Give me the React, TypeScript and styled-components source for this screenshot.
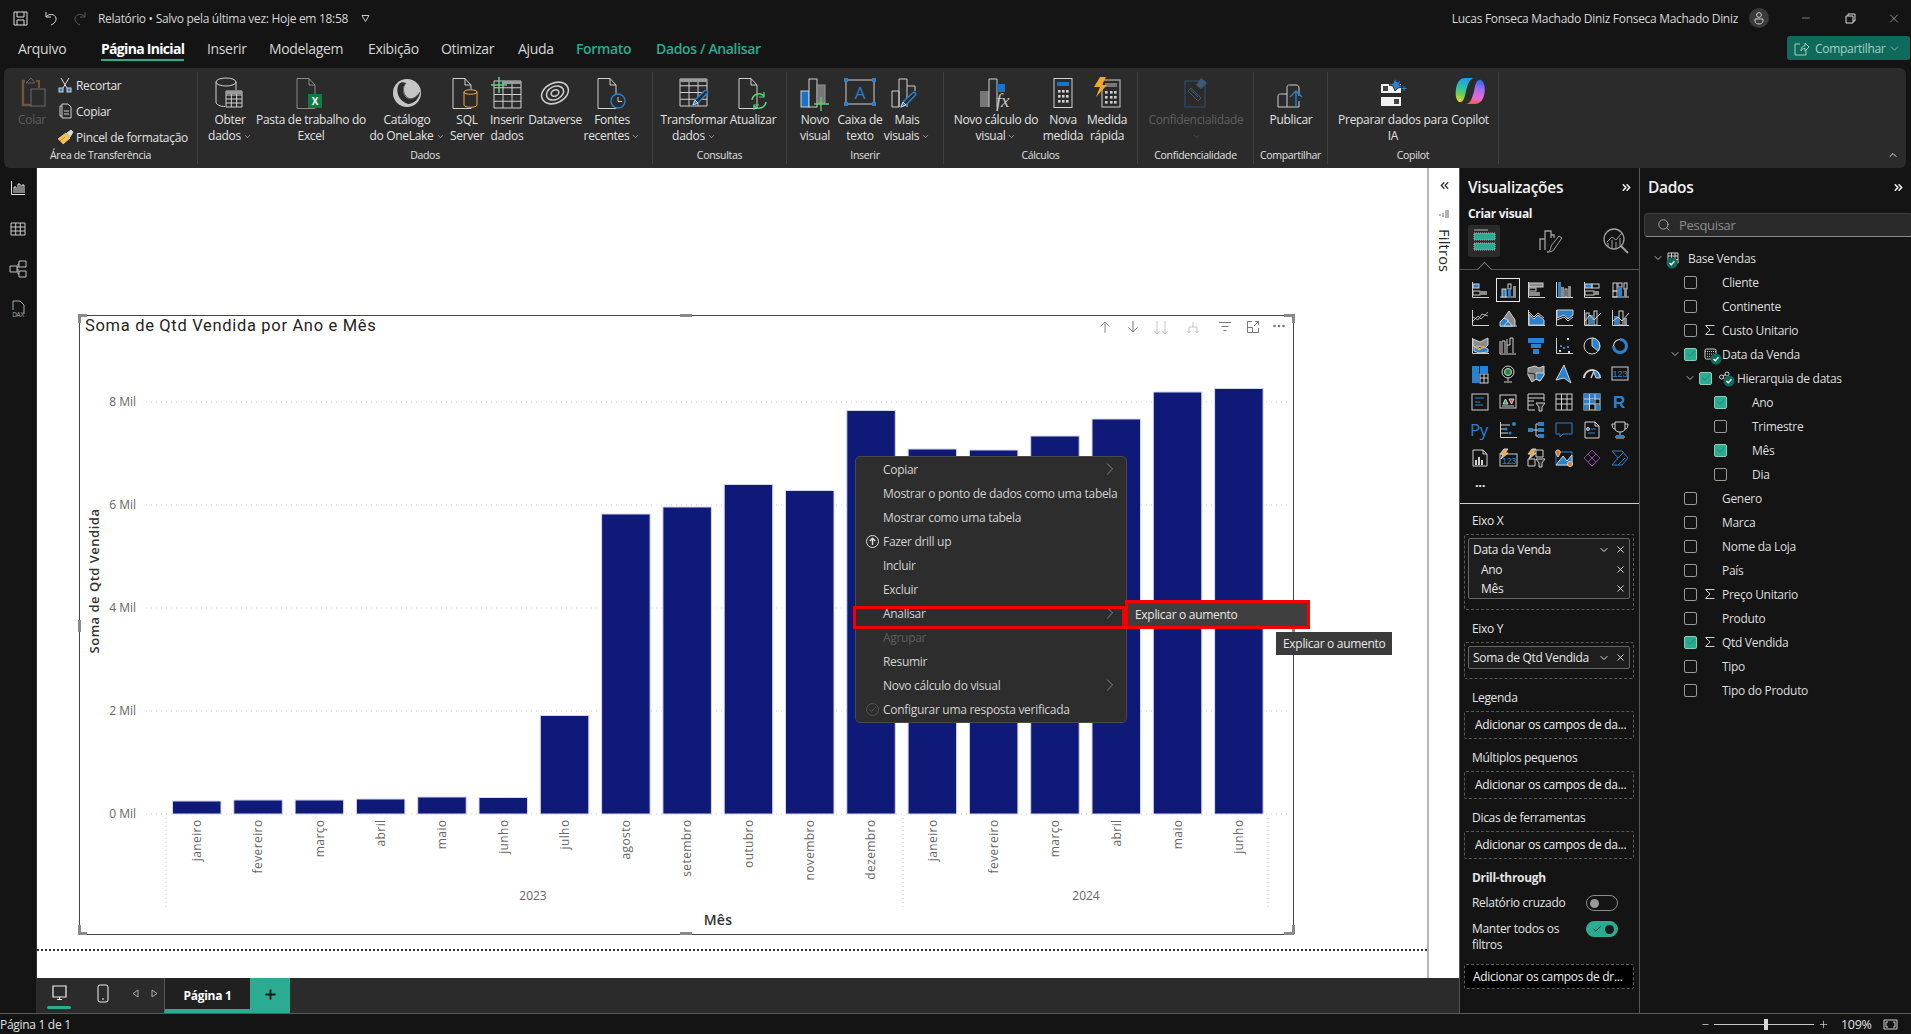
import React from 'react';
import styled, {createGlobalStyle} from 'styled-components';
import {Check, ChevronDown, ChevronRight, ChevronsLeft, ChevronsRight, ChevronUp, Minus, Plus, Search, X} from 'lucide-react';

const W = '#d0d0d0';
const B = '#2a82cf';
const Gy = '#8b8b8b';
const TEAL = '#2bab92';

const GlobalStyle = createGlobalStyle`
  html, body { margin: 0; padding: 0; background: #141414; }
  body { font-family: "Open Sans", "Liberation Sans", sans-serif; font-size: 12px; letter-spacing: -0.025em; overflow: hidden; }
  * { box-sizing: border-box; }
`;

const Root = styled.div`
  position: relative;
  width: 1911px;
  height: 1034px;
  display: flex;
  flex-direction: column;
  background: #141414;
  color: #e6e6e6;
  overflow: hidden;
`;

/* ---------- title bar ---------- */
const TitleBar = styled.div`
  height: 36px;
  flex: none;
  display: flex;
  align-items: center;
  padding: 0 10px 0 13px;
`;
const TitleIcon = styled.div<{$w: number; $dim?: boolean}>`
  flex: 0 0 ${p => p.$w}px;
  display: flex;
  opacity: ${p => (p.$dim ? 0.45 : 1)};
`;
const TitleText = styled.div`
  font-size: 12px;
  color: #d6d6d6;
  width: 263px;
  white-space: nowrap;
`;
const UserName = styled.div`
  margin-left: auto;
  white-space: nowrap;
  color: #d6d6d6;
`;
const Avatar = styled.div`
  width: 20px;
  height: 20px;
  margin-left: 11px;
  border-radius: 50%;
  background: #3a3a3a;
  display: flex;
  align-items: center;
  justify-content: center;
`;
const WinButton = styled.div<{$ml: number}>`
  margin-left: ${p => p.$ml}px;
  width: 14px;
  display: flex;
  justify-content: center;
`;

/* ---------- tabs ---------- */
const TabBar = styled.div`
  height: 32px;
  flex: none;
  display: flex;
  align-items: flex-start;
  padding: 4px 1px 0 18px;
`;
const Tab = styled.div<{$w: number; $active?: boolean; $teal?: boolean}>`
  flex: 0 0 ${p => p.$w}px;
  font-size: 14px;
  line-height: 17px;
  white-space: nowrap;
  color: ${p => (p.$teal ? TEAL : p.$active ? '#fff' : '#d4d4d4')};
  font-weight: ${p => (p.$active ? 700 : p.$teal ? 600 : 400)};
  letter-spacing: ${p => (p.$active ? '-0.05em' : '-0.025em')};
  span {
    display: inline-block;
    padding-bottom: 2px;
    border-bottom: 2px solid ${p => (p.$active ? TEAL : 'transparent')};
  }
`;
const ShareButton = styled.div`
  margin: -4px 0 0 auto;
  width: 123px;
  height: 24px;
  border-radius: 3px;
  background: #0e6b5b;
  color: #a9cdc5;
  font-size: 12px;
  display: flex;
  align-items: center;
  gap: 6px;
  padding-left: 7px;
  svg:last-child { margin-left: -3px; }
`;

/* ---------- ribbon ---------- */
const Ribbon = styled.div`
  height: 100px;
  flex: none;
  margin: 0 5px 0 4px;
  padding-top: 4px;
  background: #2b2b2b;
  border-radius: 6px;
  display: flex;
  position: relative;
`;
const RibbonGroup = styled.div<{$w: number}>`
  flex: 0 0 ${p => p.$w}px;
  min-width: 0;
  height: 92px;
  padding-top: 5px;
  display: flex;
  flex-direction: column;
  border-right: 1px solid #404040;
`;
const GroupButtons = styled.div`
  height: 70px;
  display: flex;
`;
const GroupLabel = styled.div`
  height: 16px;
  font-size: 10.5px;
  line-height: 16px;
  text-align: center;
  white-space: nowrap;
  color: #e0e0e0;
`;
const RibbonBtn = styled.div<{$w: number; $disabled?: boolean}>`
  flex: 0 0 ${p => p.$w}px;
  min-width: 0;
  display: flex;
  flex-direction: column;
  align-items: center;
  color: ${p => (p.$disabled ? '#5f5f5f' : '#e2e2e2')};
`;
const BtnIcon = styled.div`
  height: 35px;
  flex: none;
  display: flex;
  align-items: flex-start;
  justify-content: center;
`;
const BtnLabel = styled.div`
  flex: none;
  font-size: 12px;
  line-height: 16px;
  text-align: center;
  white-space: nowrap;
`;
const SmallColumn = styled.div`
  display: flex;
  flex-direction: column;
  margin: -5px 0 0 -6px;
`;
const SmallRow = styled.div`
  flex: none;
  height: 26px;
  display: flex;
  align-items: center;
  font-size: 12px;
  white-space: nowrap;
  color: #e2e2e2;
`;
const SmallIcon = styled.div`
  flex: 0 0 22px;
  display: flex;
  justify-content: center;
`;
const Collapse = styled.div`
  position: absolute;
  right: 7px;
  bottom: 7px;
  display: flex;
`;

/* ---------- main ---------- */
const Main = styled.div`
  flex: 1;
  display: flex;
  min-height: 0;
`;
const LeftNav = styled.div`
  flex: 0 0 37px;
  display: flex;
  flex-direction: column;
  border-right: 1px solid #2e2e2e;
`;
const NavSlot = styled.div`
  flex: 0 0 40.4px;
  display: flex;
  align-items: center;
  justify-content: center;
`;
const Workspace = styled.div`
  flex: 0 0 1422px;
  display: flex;
  flex-direction: column;
`;
const Sheet = styled.div`
  flex: 1;
  display: flex;
  background: #fff;
  min-height: 0;
`;
const Canvas = styled.div`
  flex: 0 0 1390px;
  padding: 147px 0 0 42px;
`;
const Visual = styled.div`
  position: relative;
  width: 1215px;
  height: 620px;
  border: 1px solid #444;
`;
const VisualTitle = styled.div`
  position: absolute;
  left: 5px;
  top: 0;
  font-family: Roboto, "Open Sans", sans-serif;
  font-size: 16.5px;
  line-height: 20px;
  letter-spacing: 0.68px;
  color: #252423;
`;
const Handle = styled.div<{$x: number; $y: number; $w: number; $h: number}>`
  position: absolute;
  left: ${p => p.$x}px;
  top: ${p => p.$y}px;
  width: ${p => p.$w}px;
  height: ${p => p.$h}px;
  background: #8a8a8a;
`;
const VisualTools = styled.div`
  position: absolute;
  right: 2px;
  top: 5px;
  display: flex;
`;
const ToolSlot = styled.div<{$w: number}>`
  flex: 0 0 ${p => p.$w}px;
  display: flex;
  justify-content: center;
`;
const PageEnd = styled.div`
  margin: 14px 0 0 -42px;
  border-top: 2px dotted #333;
`;
const FilterRail = styled.div`
  flex: 0 0 32px;
  border-left: 2px solid #b5b5b5;
  display: flex;
  flex-direction: column;
  align-items: center;
  color: #333;
  padding-top: 11px;
`;
const FilterGap = styled.div`
  height: 17px;
`;
const FilterTitle = styled.div`
  writing-mode: vertical-rl;
  font-size: 14.5px;
  font-weight: 500;
  letter-spacing: 0.25px;
  color: #252423;
  margin-top: 10px;
`;
const PageBar = styled.div`
  height: 35px;
  flex: none;
  background: #2b2b2b;
  display: flex;
`;
const DeviceSlot = styled.div<{$w: number; $active?: boolean}>`
  flex: 0 0 ${p => p.$w}px;
  position: relative;
  display: flex;
  align-items: center;
  justify-content: center;
  padding-bottom: 5px;
  &::after {
    content: "";
    display: ${p => (p.$active ? 'block' : 'none')};
    position: absolute;
    left: 10px;
    width: 24px;
    bottom: 4px;
    height: 3px;
    border-radius: 2px;
    background: ${TEAL};
  }
`;
const PageTab = styled.div`
  flex: 0 0 86px;
  margin-left: 1px;
  border-left: 1px solid #555;
  background: #202020;
  border-bottom: 4px solid ${TEAL};
  font-weight: 700;
  color: #fff;
  display: flex;
  align-items: center;
  justify-content: center;
  padding-top: 3px;
`;
const AddPage = styled.div`
  flex: 0 0 40px;
  background: ${TEAL};
  display: flex;
  align-items: center;
  justify-content: center;
  padding-bottom: 3px;
`;

/* ---------- visualizations pane ---------- */
const VizPane = styled.div`
  flex: 0 0 181px;
  border-left: 1px solid #555;
  border-right: 1px solid #555;
  display: flex;
  flex-direction: column;
`;
const PaneHeader = styled.div`
  height: 38px;
  flex: none;
  display: flex;
  align-items: center;
  justify-content: space-between;
  padding: 0 6px 0 8px;
  font-size: 15.5px;
  font-weight: 600;
  color: #f2f2f2;
`;
const CreateLabel = styled.div`
  height: 16px;
  line-height: 16px;
  padding-left: 8px;
  font-weight: 700;
  color: #f0f0f0;
`;
const VizTabs = styled.div`
  position: relative;
  height: 48px;
  padding: 3px 8px 0;
  display: flex;
  border-bottom: 1px solid #555;
`;
const VizTab = styled.div<{$active?: boolean; $w: number}>`
  flex: 0 0 ${p => p.$w}px;
  height: 32px;
  display: flex;
  align-items: center;
  justify-content: center;
  border-radius: 2px;
  background: ${p => (p.$active ? '#2b2b2b' : 'transparent')};
`;
const Notch = styled.div`
  position: absolute;
  left: 19px;
  bottom: -6px;
  width: 11px;
  height: 11px;
  background: #141414;
  border-left: 1px solid #777;
  border-top: 1px solid #777;
  transform: rotate(45deg);
`;
const VizGrid = styled.div`
  display: grid;
  grid-template-columns: repeat(6, 28px);
  grid-auto-rows: 28px;
  padding: 6px 0 0 6px;
  height: 234px;
  border-bottom: 1px solid #cfcfcf;
`;
const VizCell = styled.div<{$selected?: boolean}>`
  width: 28px;
  height: 28px;
  display: flex;
  align-items: center;
  justify-content: center;
  ${p => p.$selected && `
    > div { border: 1px solid #e8e8e8; width: 24px; height: 24px; display: flex; align-items: center; justify-content: center; }
  `}
`;
const MoreDots = styled.div`
  grid-column: 1;
  text-align: center;
  font-weight: 700;
  font-size: 13px;
  color: #e8e8e8;
  line-height: 20px;
`;
const WellTitle = styled.div<{$bold?: boolean; $first?: boolean}>`
  margin-top: ${p => (p.$first ? 9 : 11)}px;
  height: 16px;
  line-height: 16px;
  padding-left: 12px;
  color: #e4e4e4;
  font-weight: ${p => (p.$bold ? 700 : 400)};
`;
const WellBox = styled.div<{$h?: number; $black?: boolean}>`
  margin: ${p => (p.$black ? 11 : 5)}px 0 0 4px;
  width: 170px;
  ${p => (p.$h ? `height: ${p.$h}px;` : '')}
  padding: 3px 3px 10px;
  border: 1px dashed #5a5a5a;
  border-radius: 2px;
  background: ${p => (p.$black ? '#000' : 'transparent')};
`;
const WellHint = styled.div<{$black?: boolean}>`
  line-height: ${p => (p.$black ? 17 : 19)}px;
  padding-left: ${p => (p.$black ? 5 : 7)}px;
  color: #f0f0f0;
  white-space: nowrap;
`;
const FieldBox = styled.div`
  border: 1px solid #666;
  border-radius: 2px;
  background: #1e1e1e;
`;
const FieldRow = styled.div<{$sub?: boolean; $h: number}>`
  height: ${p => p.$h}px;
  display: flex;
  align-items: center;
  padding: 0 3px 0 ${p => (p.$sub ? 12 : 4)}px;
  color: #e8e8e8;
  white-space: nowrap;
  span { flex: 1; }
  svg { margin-left: 5px; }
`;
const DrillRow = styled.div<{$h: number; $mt: number}>`
  height: ${p => p.$h}px;
  margin-top: ${p => p.$mt}px;
  padding: 0 21px 0 12px;
  display: flex;
  justify-content: space-between;
  color: #e4e4e4;
  line-height: 16px;
`;
const Toggle = styled.div<{$on?: boolean}>`
  flex: none;
  width: 32px;
  height: 16px;
  border-radius: 8px;
  border: 1px solid ${p => (p.$on ? TEAL : '#8a8a8a')};
  background: ${p => (p.$on ? TEAL : 'transparent')};
  display: flex;
  align-items: center;
  justify-content: ${p => (p.$on ? 'flex-end' : 'flex-start')};
  padding: 0 3px;
  gap: 3px;
  i {
    width: 9px;
    height: 9px;
    border-radius: 50%;
    background: ${p => (p.$on ? '#1b1b1b' : '#9a9a9a')};
  }
`;

/* ---------- data pane ---------- */
const DataPane = styled.div`
  flex: 1;
  display: flex;
  flex-direction: column;
`;
const SearchBox = styled.div`
  margin: 7px -2px 0 4px;
  height: 24px;
  flex: none;
  border: 1px solid #3e3e3e;
  border-bottom-color: #8a8a8a;
  border-radius: 4px;
  background: #2a2a2a;
  display: flex;
  align-items: center;
  gap: 8px;
  padding-left: 12px;
  font-size: 13px;
  color: #8d8d8d;
`;
const Tree = styled.div`
  margin-top: 9px;
`;
const TreeRow = styled.div<{$indent: number; $table?: boolean}>`
  height: 24px;
  display: flex;
  align-items: center;
  padding-left: ${p => (p.$table ? 12 : 29 + p.$indent * 15)}px;
  color: #dedede;
  white-space: nowrap;
`;
const ExpandSlot = styled.div`
  flex: 0 0 15px;
  display: flex;
  align-items: center;
`;
const CheckBox = styled.div<{$on?: boolean}>`
  flex: 0 0 13px;
  height: 13px;
  border-radius: 2px;
  border: 1px solid ${p => (p.$on ? '#8fcabd' : '#9a9a9a')};
  background: ${p => (p.$on ? TEAL : 'transparent')};
  display: flex;
  align-items: center;
  justify-content: center;
  color: #156f5e;
`;
const FieldIcon = styled.div<{$w?: number}>`
  flex: 0 0 ${p => p.$w ?? 25}px;
  display: flex;
  align-items: center;
  padding-left: 7px;
  font-size: 15px;
  color: #dedede;
`;
const TableIcon = styled(FieldIcon)`
  padding-left: 0;
`;

/* ---------- status ---------- */
const StatusBar = styled.div`
  height: 21px;
  flex: none;
  border-top: 1px solid #5a5a5a;
  display: flex;
  align-items: center;
  color: #e0e0e0;
`;
const ZoomControl = styled.div`
  margin-left: auto;
  display: flex;
  align-items: center;
  padding-right: 13px;
  gap: 4px;
`;
const ZoomTrack = styled.div`
  position: relative;
  width: 100px;
  height: 1px;
  background: #c8c8c8;
  &::after {
    content: "";
    position: absolute;
    left: 50px;
    top: -5px;
    width: 4px;
    height: 11px;
    background: #d8d8d8;
  }
`;
const ZoomValue = styled.div`
  width: 28px;
  margin: 0 10px 0 8px;
  white-space: nowrap;
  font-size: 12.5px;
`;

/* ---------- context menu ---------- */
const Menu = styled.div`
  position: absolute;
  left: 855px;
  top: 456px;
  width: 272px;
  height: 267px;
  background: #2d2d2d;
  border: 1px solid #4a4a4a;
  border-radius: 5px;
`;
const MenuItem = styled.div<{$disabled?: boolean}>`
  height: 24px;
  display: flex;
  align-items: center;
  color: ${p => (p.$disabled ? '#5e5e5e' : '#d2d2d2')};
  white-space: nowrap;
`;
const MenuIcon = styled.div`
  flex: 0 0 27px;
  display: flex;
  padding-left: 10px;
`;
const MenuArrow = styled.div`
  margin-left: auto;
  padding-right: 6px;
  display: flex;
  color: #b5b5b5;
`;
const RedFrame = styled.div`
  position: absolute;
  left: -3px;
  top: 149px;
  width: 272px;
  height: 23px;
  border: 3px solid #f40000;
  pointer-events: none;
`;
const SubMenu = styled.div`
  position: absolute;
  left: 269px;
  top: 143px;
  width: 185px;
  height: 29px;
  border: 3px solid #f40000;
  background: #3f3f3f;
  padding-left: 7px;
  display: flex;
  align-items: center;
  color: #e8e8e8;
`;
const Tooltip = styled.div`
  position: absolute;
  left: 1276px;
  top: 632px;
  width: 116px;
  height: 23px;
  background: #3b3b3b;
  color: #e8e8e8;
  display: flex;
  align-items: center;
  padding-left: 7px;
  white-space: nowrap;
`;

/* ---------- icons ---------- */
const Ico: React.FC<{s?: number; w?: number; h?: number; vb?: string; c?: string; children?: React.ReactNode}> = ({s = 32, w, h, vb, c = W, children}) => (
    <svg width={w ?? s} height={h ?? s} viewBox={vb ?? `0 0 ${w ?? s} ${h ?? s}`} fill="none" stroke={c} strokeWidth={1} style={{overflow: 'visible', display: 'block', flex: 'none'}}>
        {children}
    </svg>
);
const r = (x: number, y: number, w: number, h: number, f: string = B, s: string = 'none') => (
    <rect x={x} y={y} width={w} height={h} fill={f} stroke={s}/>
);
const axis = <path d="M1.5 1V16.5H18" stroke={W}/>;
const Caret = () => <ChevronDown size={9} strokeWidth={1.5} style={{marginLeft: 2, verticalAlign: -1}}/>;
const DocPath = "M2 1.5H14L20 8V31.5H2ZM14 1.5V8H20";
const gridTable = (x: number, y: number, w: number, h: number, rows: number, cols: number, col: string = W) => {
    const d: string[] = [];
    for (let i = 1; i < rows; i++) d.push(`M${x} ${y + (h * i) / rows}H${x + w}`);
    for (let i = 1; i < cols; i++) d.push(`M${x + (w * i) / cols} ${y}V${y + h}`);
    return <path d={`M${x} ${y}H${x + w}V${y + h}H${x}Z${d.join('')}`} stroke={col} fill="#2b2b2b"/>;
};
const pencil = (x: number, y: number) => (
    <g transform={`translate(${x} ${y})`}>
        <path d="M1 16L3 11L13 1.5C14.5 0.5 16.5 2.5 15.5 4L6 14Z" fill="#2b2b2b" stroke={B} strokeWidth={1.4}/>
        <path d="M1 16L3 11L6 14Z" fill={B}/>
    </g>
);

const Ic = {
    colar: <Ico w={27} h={30}><path d="M6 4H4V28H14" stroke="#6f5636" strokeWidth={2.4}/><path d="M17 4H20V11" stroke="#6f5636" strokeWidth={2}/><path d="M7 6L12 1L16 6Z" stroke="#666"/><rect x={12} y={12} width={14} height={17} stroke="#6a6a6a" fill="#2b2b2b"/></Ico>,
    cut: <Ico s={16} vb="0 0 16 16"><path d="M4 1L10 11M12 1L6 11" stroke="#d8d8d8"/><rect x={2} y={11} width={4} height={4} fill={B}/><rect x={10} y={11} width={4} height={4} fill={B}/></Ico>,
    copy: <Ico s={16} vb="0 0 16 16"><path d="M5 3H3V13H5" stroke={W}/><path d="M5 1H11L14 4V15H5ZM7 8H12M7 11H12" stroke={W}/></Ico>,
    brush: <Ico s={17} vb="0 0 17 17"><path d="M1 10L9 4L13 9L6 15Z" fill="#f2c55c" stroke="#f2c55c"/><path d="M1 10L6 15M3 12L8 8" stroke="#b98a2b"/><path d="M10 4L14 1L16 3L13 8Z" fill="#ddd"/></Ico>,
    obter: <Ico><ellipse cx={12} cy={5} rx={10} ry={4}/><path d="M2 5V25C2 28 7 29.5 11 29.5M22 5V13"/>{gridTable(12, 14, 16, 16, 4, 3)}{r(12, 14, 16, 3, '#9a9a9a')}</Ico>,
    excel: <Ico><path d={DocPath} stroke={Gy}/><rect x={13} y={17} width={14} height={14} fill="#107c41" stroke="none"/><text x={20} y={28} fontSize={10} fontWeight={700} fill="#fff" stroke="none" textAnchor="middle" fontFamily="Open Sans">X</text></Ico>,
    lake: <Ico><circle cx={16} cy={16} r={14} fill="#c6c6c6" stroke="none"/><path d="M8 7C4 13 7 24 17 27C23 27 28 22 29 15C25 21 20 23 16 21C12 18 10 11 15 6C12 5 10 5 8 7Z" fill="#2b2b2b" stroke="none"/><path d="M15 6C11 10 12 18 17 21C21 23 25 21 29 15" stroke="#555" strokeWidth={1}/></Ico>,
    sql: <Ico><path d={DocPath} stroke={W}/><path d="M13 15C13 12 26 12 26 15V28C26 31 13 31 13 28Z" fill="#2b2b2b" stroke="#f0a84a"/><path d="M13 15C13 18 26 18 26 15" stroke="#f0a84a"/></Ico>,
    insert: <Ico>{gridTable(3, 4, 27, 27, 4, 3)}{r(11, 4, 19, 3, '#9a9a9a')}<path d="M0 8H16M8 0V16" stroke="#5bd67a" strokeWidth={1.5}/></Ico>,
    dataverse: <Ico><g transform="rotate(-25 16 16)"><ellipse cx={16} cy={16} rx={14} ry={10} stroke="#c9c9c9" strokeWidth={1.6}/><ellipse cx={16} cy={16} rx={9} ry={6.5} stroke="#c9c9c9" strokeWidth={1.6}/><ellipse cx={16} cy={16} rx={4} ry={3} stroke="#c9c9c9" strokeWidth={1.6}/></g></Ico>,
    recent: <Ico><path d={DocPath} stroke={W}/><circle cx={22} cy={24} r={7} fill="#2b2b2b" stroke={B} strokeWidth={1.4}/><path d="M22 20V24.5H26" stroke={W}/></Ico>,
    transform: <Ico>{gridTable(2, 2, 27, 27, 4, 3)}{r(2, 2, 27, 3, '#9a9a9a')}{pencil(14, 12)}</Ico>,
    refresh: <Ico><path d={DocPath} stroke={W}/><path d="M15 23A7 7 0 0 1 27 19M29 25A7 7 0 0 1 17 29" stroke="#5bd67a" strokeWidth={1.5}/><path d="M27 15V20H22M17 33V28H22" stroke="#5bd67a" strokeWidth={1.2}/></Ico>,
    newVisual: <Ico>{r(2, 14, 8, 16, '#1a73c6', W)}{r(10, 2, 8, 28, '#2b2b2b', W)}{r(18, 8, 8, 18, '#777', '#999')}<path d="M15 27H30M22 20V34" stroke="#5bd67a" strokeWidth={1.3}/></Ico>,
    textbox: <Ico><rect x={2} y={3} width={28} height={24} stroke={W}/>{r(0, 1, 4, 4)}{r(28, 1, 4, 4)}{r(0, 25, 4, 4)}{r(28, 25, 4, 4)}<text x={16} y={22} fontSize={17} fill={B} stroke="none" textAnchor="middle" fontFamily="Open Sans">A</text></Ico>,
    moreVisual: <Ico><path d="M1 14H8V30H1ZM8 30V2H16V30M16 9H24V14" stroke={W}/>{pencil(9, 14)}</Ico>,
    calc: <Ico>{r(0, 14, 9, 16, '#777')}<path d="M9 30V2H17V30" stroke={W} fill="none"/>{r(17, 7, 8, 8, '#1a73c6')}<text x={16} y={30} fontSize={19} fontStyle="italic" fill="#c8c8c8" stroke="none" fontFamily="Liberation Serif">fx</text></Ico>,
    measure: <Ico><rect x={7} y={1.5} width={18} height={29} stroke={W}/>{r(10, 5, 12, 4, '#1a73c6')}{[13, 18, 23].map(y => [11, 15, 19].map(x => <rect key={`${x}${y}`} x={x} y={y} width={2.6} height={2.6} fill={W} stroke="none"/>))}</Ico>,
    quick: <Ico w={28} h={32}><rect x={9} y={3} width={18} height={27} stroke={W}/>{r(12, 6, 12, 4, '#777')}{[14, 19, 24].map(y => [12, 17, 21].map(x => <rect key={`${x}${y}`} x={x} y={y} width={2.6} height={2.6} fill={W} stroke="none"/>))}<path d="M7 0H13L9 8H14L3 20L7 10H1Z" fill="#f2a62c" stroke="none"/></Ico>,
    sensitivity: <Ico><rect x={5} y={4} width={20} height={26} stroke="#2c4c68" strokeWidth={1.2}/><path d="M8 14L18 24L21 21L11 11Z" fill="#2b2b2b" stroke="#3b5a76"/><path d="M16 8L21 1L27 6L21 12Z" fill="#3b5a76" stroke="none"/><path d="M11 13L18 20" stroke="#3b5a76"/></Ico>,
    publish: <Ico><path d="M3 30V20C3 17 4 17 6 17H12V30H3ZM12 30H24V24M12 17V11C12 8 13 8 15 8H21C23 8 24 9 24 11V19" stroke={W}/><path d="M21 30V14M15 20L21 14L27 20" stroke={B} strokeWidth={1.4}/></Ico>,
    prepare: <Ico w={28} h={30}><rect x={2} y={7} width={20} height={9} fill="#f2f2f2" stroke="none"/><rect x={2} y={20} width={20} height={9} fill="#f2f2f2" stroke="none"/>{r(4, 9, 5, 5, '#444')}{r(15, 22, 5, 5, '#444')}<path d="M16 1L18 5L22 3L20 8L24 10L19 11L16 14L14 9L10 8L14 6Z" fill={B} stroke="#2b2b2b"/><path d="M25 9V14M22.5 11.5H27.5" stroke={B}/></Ico>,
    copilot: (
        <Ico w={30} h={28}>
            <defs>
                <linearGradient id="cpA" x1="0.5" y1="0" x2="0.3" y2="1"><stop offset="0" stopColor="#1f9be8"/><stop offset="0.45" stopColor="#2fc4a0"/><stop offset="0.75" stopColor="#7ed04a"/><stop offset="1" stopColor="#f4cf35"/></linearGradient>
                <linearGradient id="cpB" x1="0.6" y1="0" x2="0.4" y2="1"><stop offset="0" stopColor="#2b6df0"/><stop offset="0.35" stopColor="#a56cf0"/><stop offset="0.75" stopColor="#e86ad0"/><stop offset="1" stopColor="#f0603a"/></linearGradient>
            </defs>
            <path d="M10 1H19C14 2 12.5 8 10.5 16C9.5 22 7.5 26 4 25C1 23 0 18 1 12C2 5 5 1 10 1Z" fill="url(#cpA)" stroke="none"/>
            <path d="M20 27H11C16 26 17.5 20 19.5 12C20.5 6 22.5 2 26 3C29 5 30.5 10 29.5 16C28.5 23 25 27 20 27Z" fill="url(#cpB)" stroke="none"/>
        </Ico>
    ),
};

const Check2 = (x: number, y: number) => (
    <g>
        <circle cx={x} cy={y} r={5.5} fill="#0e6b5b" stroke="none"/>
        <path d={`M${x - 2.5} ${y}L${x - 0.7} ${y + 1.8}L${x + 2.5} ${y - 1.8}`} stroke="#fff" strokeWidth={1.3}/>
    </g>
);

const vizIcons: React.ReactNode[] = [
    <>{axis}{r(2, 3, 6, 4, B, W)}{r(2, 10, 7, 4, 'none', W)}{r(9, 10, 7, 4, Gy)}</>,
    <><path d="M1 16H17" stroke={W}/>{r(3, 8, 4, 8, B, W)}{r(9, 3, 3, 5, 'none', W)}{r(9, 8, 3, 8, B)}{r(14, 5, 3, 11, Gy)}</>,
    <>{axis}{r(2, 2, 14, 4, Gy, W)}{r(2, 7, 7, 3, 'none', W)}{r(2, 11, 11, 4, Gy)}</>,
    <>{axis}{r(3, 1, 3, 15, B)}{r(6, 6, 3, 10, Gy)}{r(10, 8, 2, 8, 'none', W)}{r(13, 5, 3, 11, Gy)}</>,
    <>{axis}{r(2, 3, 7, 4, B, W)}{r(9, 3, 7, 4, 'none', W)}{r(2, 10, 9, 4, 'none', W)}{r(11, 10, 5, 4, Gy)}</>,
    <><path d="M1 16H18" stroke={W}/>{r(2, 2, 4, 8, 'none', W)}{r(2, 10, 4, 6, 'none', W)}{r(7, 2, 4, 4, 'none', W)}{r(7, 6, 4, 10, B)}{r(13, 2, 3, 6, 'none', W)}{r(13, 8, 3, 8, Gy)}</>,

    <>{axis}<path d="M2 12L7 7L10 10L17 3M2 8L7 11L11 5L17 7" stroke={W} strokeWidth={0.8}/></>,
    <><path d="M1 17H18" stroke={W}/><path d="M1 13L6 8L9 11V17H1Z" fill={B}/><path d="M5 9L10 2L16 11V17H9L9 11Z" fill={Gy}/><path d="M9 12L13 17H5Z" fill={B}/></>,
    <>{axis}<path d="M2 5L7 10L11 6L17 11V16H2Z" fill={B}/><path d="M2 3L7 8L11 4L17 9" stroke={W}/></>,
    <>{axis}<path d="M2 1H18V6L13 10L9 6L2 9Z" fill={B}/><path d="M2 11L9 8L13 12L18 8" stroke={W}/></>,
    <>{axis}{r(3, 4, 3, 12, 'none', W)}{r(7, 6, 3, 10, B)}{r(11, 2, 3, 14, 'none', W)}<path d="M2 12L7 6L11 11L18 4" stroke={W}/></>,
    <>{axis}{r(3, 7, 4, 9, B)}{r(8, 2, 4, 14, 'none', W)}{r(13, 9, 3, 7, Gy)}<path d="M2 12L7 8L11 12L18 4" stroke={W}/></>,

    <>{axis}<path d="M2 2L9 5L17 1V8L13 12L9 9L5 12L2 8Z" fill={Gy}/><path d="M3 9L8 13L13 10L17 12V15L8 16L3 14Z" fill={B}/><path d="M5 9L9 12L13 9" stroke="#f0a030" strokeWidth={1.5}/></>,
    <><path d="M1 17H17M1 17V4" stroke={W}/><path d="M3 16V4H6V16M8 16V2M8 8H11V1H14V16" stroke={W}/></>,
    <>{r(1, 1, 16, 5)}{r(4, 7, 10, 4)}{r(6, 12, 6, 5)}</>,
    <>{axis}{r(5, 8, 2, 2)}{r(8, 10, 2, 2)}{r(12, 1, 2, 2, W)}{r(12, 9, 2, 2)}{r(13, 14, 2, 2, W)}{r(4, 13, 2, 2, W)}</>,
    <><circle cx={9} cy={9} r={8} stroke={W}/><path d="M9 1A8 8 0 0 1 15 14L9 9Z" fill={B}/></>,
    <><path d="M9 2.5A6.5 6.5 0 1 1 2.5 9" stroke={B} strokeWidth={3}/><path d="M2.5 9A6.5 6.5 0 0 1 9 2.5" stroke={W} strokeWidth={1.2}/></>,

    <>{r(1, 1, 7, 17, B)}{r(9, 1, 8, 7, B)}{r(9, 9, 8, 9, 'none', W)}<path d="M13 9V18M9 13H17" stroke={W}/></>,
    <><circle cx={9} cy={7} r={6} stroke={W}/><circle cx={9} cy={7} r={3.5} fill="#1d8a45"/><path d="M9 13V16M5 17H13" stroke={W}/></>,
    <><path d="M1 3L8 1L12 3L17 1V10L13 16L9 14L5 17L1 10Z" fill={Gy}/><path d="M9 8H17V10L13 16L9 14Z" fill={B}/><path d="M1 8L8 9V14" stroke="#222"/></>,
    <><path d="M9 0L16 18L9 13L1 15Z" fill={B}/></>,
    <><path d="M1 13A8 8 0 0 1 17 13" stroke={W} strokeWidth={2}/><path d="M8 13L11 6" stroke={W} strokeWidth={1.5}/><path d="M10 5A8 8 0 0 1 17 13H13Z" fill={B}/></>,
    <><rect x={1} y={2} width={16} height={13} stroke={W}/><text x={9} y={12} fontSize={9.5} fill={B} stroke="none" textAnchor="middle" fontFamily="Liberation Sans">123</text></>,

    <><rect x={1} y={1} width={16} height={16} stroke={W}/><path d="M4 5H13M4 9H9M4 12H12" stroke={B} strokeWidth={1.2}/></>,
    <><rect x={1} y={2} width={16} height={13} stroke={W}/><path d="M4 11L6.5 6L9 11Z" fill="#2fb35a"/><path d="M10 6H15L12.5 11Z" fill="#e24a4a"/><path d="M3 13H15" stroke={W}/></>,
    <><path d="M1 1H17V5H1ZM1 5V17H8M17 5V8M1 8H7M1 12H7" stroke={W}/><path d="M9 10H18L15 14V18H12V14Z" fill="#2b2b2b" stroke={W}/></>,
    <><rect x={1} y={1} width={16} height={16} stroke={W}/><path d="M1 6H17M1 11H17M6.5 1V17M12 1V17" stroke={W}/></>,
    <><rect x={1} y={1} width={16} height={16} stroke={W}/>{r(1, 1, 16, 5)}{r(1, 6, 5, 11)}{r(7, 7, 4, 4)}{r(12, 12, 5, 5)}<path d="M1 6H17M1 11H17M6.5 1V17M12 1V17" stroke={W}/></>,
    <><text x={8} y={15} fontSize={17} fontWeight={700} fill={B} stroke="none" textAnchor="middle" fontFamily="Liberation Sans">R</text></>,

    <><text x={8} y={15} fontSize={17} fontWeight={500} fill={B} stroke="none" textAnchor="middle" fontFamily="Open Sans">Py</text></>,
    <>{axis}<path d="M2 4H11M2 8H6M2 12H9" stroke={W}/><circle cx={15} cy={3} r={2} fill={B} stroke="none"/><circle cx={7} cy={8} r={1.5} fill={B} stroke="none"/><circle cx={11} cy={12} r={1.5} fill={B} stroke="none"/></>,
    <>{r(1, 7, 5, 4)}{r(11, 1, 6, 4)}{r(11, 7, 6, 4)}{r(11, 13, 6, 4)}<path d="M6 9H11M9 3V15H11M9 3H11" stroke={W}/></>,
    <><path d="M1 2H17V13H8L5 16V13H1Z" stroke={B}/></>,
    <><path d="M2 1H12L16 5V17H2ZM12 1V5H16" stroke={W}/><circle cx={5} cy={8} r={1.5} fill={B}/><path d="M8 8H13M5 12H12" stroke={B}/></>,
    <><path d="M4 1H14V7C14 10 12 11 9 11C6 11 4 10 4 7ZM4 3H1C1 6 2 8 4 8M14 3H17C17 6 16 8 14 8M9 11V14M5 15H13V17H5Z" stroke={W}/>{r(5, 15, 8, 2)}</>,

    <><path d="M2 1H12L16 5V17H2ZM12 1V5H16" stroke={W}/>{r(4, 11, 2, 5, W)}{r(7, 8, 2, 8, W)}{r(10, 11, 2, 5, W)}</>,
    <><rect x={1} y={5} width={17} height={12} stroke={W}/><text x={10} y={15} fontSize={9} fill={B} stroke="none" textAnchor="middle" fontFamily="Liberation Sans">123</text><path d="M5 0H9L6 4H9L2 10L4 5H1Z" fill="#f2a62c"/></>,
    <><path d="M9 1H16V8H9ZM1 10H8V17H1Z" stroke={W}/><path d="M9 10H18L15 14V18H12V14Z" fill="#2b2b2b" stroke={W}/><path d="M5 0H9L6 4H9L2 10L4 5H1Z" fill="#f2a62c"/></>,
    <>{r(1, 3, 16, 13, 'none', B)}<path d="M1 16L8 7L12 12L17 6V16Z" fill={B}/><path d="M3 1C6 1 6 4 3 8C0 4 0 1 3 1Z" fill="#e3761c"/><circle cx={15} cy={15} r={2.5} fill="#e3761c"/></>,
    <><path d="M9 1L17 9L9 17L1 9Z" stroke="#8f3ea8"/><path d="M5 5L13 13M13 5L5 13" stroke="#8f3ea8"/></>,
    <><path d="M1 2H11L17 9L11 16H1L7 9Z" stroke={B}/><path d="M7 9L13 3M7 16L14 9" stroke={B}/></>,
];

/* ---------- chart ---------- */
const months = ['janeiro', 'fevereiro', 'março', 'abril', 'maio', 'junho', 'julho', 'agosto', 'setembro', 'outubro', 'novembro', 'dezembro', 'janeiro', 'fevereiro', 'março', 'abril', 'maio', 'junho'];
const tops = [801, 800, 800, 799, 797, 797.5, 715.5, 514, 507, 484.5, 490.5, 410.5, 449, 450, 436, 419, 392, 388.5];
const BASE = 814;

const ChartSvg = styled.svg`
  position: absolute;
  left: 0;
  top: 0;
  font-family: "Open Sans", sans-serif;
  letter-spacing: 0;
`;

const Chart: React.FC = () => (
    <ChartSvg width={1213} height={618} viewBox="80 316 1213 618">
        {[402, 505, 608, 711, 814].map((y, i) => (
            <g key={y}>
                <line x1={146} x2={1288} y1={y} y2={y} stroke="#c9c9c9" strokeDasharray="1 4"/>
                <text x={136} y={y + 4} textAnchor="end" fontSize={12} fill="#666">{8 - i * 2} Mil</text>
            </g>
        ))}
        {tops.map((t, i) => (
            <rect key={i} x={172.5 + i * 61.3} y={t} width={48.5} height={BASE - t} fill="#0f1a78" stroke="#d5d7ee" strokeWidth={1}/>
        ))}
        {[166, 903, 1268].map(x => <line key={x} x1={x} x2={x} y1={818} y2={908} stroke="#cfcfcf" strokeDasharray="1 3"/>)}
        {months.map((m, i) => (
            <text key={i} transform={`translate(${201 + i * 61.3} 819.5) rotate(-90)`} textAnchor="end" fontSize={12} fill="#666" letterSpacing={0.4}>{m}</text>
        ))}
        <text x={533} y={900} textAnchor="middle" fontSize={12} fill="#666">2023</text>
        <text x={1086} y={900} textAnchor="middle" fontSize={12} fill="#666">2024</text>
        <text transform="translate(99 581) rotate(-90)" textAnchor="middle" fontSize={13} fontWeight={600} fill="#333" letterSpacing={0.5}>Soma de Qtd Vendida</text>
        <text x={718} y={925} textAnchor="middle" fontSize={14} fontWeight={600} fill="#333" letterSpacing={0.3}>Mês</text>
    </ChartSvg>
);

/* ---------- data ---------- */
const tabs = [
    {t: 'Arquivo', w: 83},
    {t: 'Página Inicial', w: 106, active: true},
    {t: 'Inserir', w: 62},
    {t: 'Modelagem', w: 99},
    {t: 'Exibição', w: 73},
    {t: 'Otimizar', w: 77},
    {t: 'Ajuda', w: 58},
    {t: 'Formato', w: 80, teal: true},
    {t: 'Dados / Analisar', w: 130, teal: true},
];

type Btn = {w: number; icon: React.ReactNode; l1: string; l2?: string; caret?: boolean; disabled?: boolean};
const groups: {label: string; w: number; btns: Btn[]}[] = [
    {label: 'Dados', w: 455, btns: [
        {w: 64, icon: Ic.obter, l1: 'Obter', l2: 'dados', caret: true},
        {w: 98, icon: Ic.excel, l1: 'Pasta de trabalho do', l2: 'Excel'},
        {w: 94, icon: Ic.lake, l1: 'Catálogo', l2: 'do OneLake', caret: true},
        {w: 26, icon: Ic.sql, l1: 'SQL', l2: 'Server'},
        {w: 54, icon: Ic.insert, l1: 'Inserir', l2: 'dados'},
        {w: 42, icon: Ic.dataverse, l1: 'Dataverse'},
        {w: 72, icon: Ic.recent, l1: 'Fontes', l2: 'recentes', caret: true},
    ]},
    {label: 'Consultas', w: 134, btns: [
        {w: 82, icon: Ic.transform, l1: 'Transformar', l2: 'dados', caret: true},
        {w: 36, icon: Ic.refresh, l1: 'Atualizar'},
    ]},
    {label: 'Inserir', w: 157, btns: [
        {w: 56, icon: Ic.newVisual, l1: 'Novo', l2: 'visual'},
        {w: 34, icon: Ic.textbox, l1: 'Caixa de', l2: 'texto'},
        {w: 60, icon: Ic.moreVisual, l1: 'Mais', l2: 'visuais', caret: true},
    ]},
    {label: 'Cálculos', w: 194, btns: [
        {w: 104, icon: Ic.calc, l1: 'Novo cálculo do', l2: 'visual', caret: true},
        {w: 30, icon: Ic.measure, l1: 'Nova', l2: 'medida'},
        {w: 58, icon: Ic.quick, l1: 'Medida', l2: 'rápida'},
    ]},
    {label: 'Confidencialidade', w: 116, btns: [
        {w: 116, icon: Ic.sensitivity, l1: 'Confidencialidade', l2: '', caret: true, disabled: true},
    ]},
    {label: 'Compartilhar', w: 74, btns: [{w: 74, icon: Ic.publish, l1: 'Publicar'}]},
    {label: 'Copilot', w: 171, btns: [
        {w: 130, icon: Ic.prepare, l1: 'Preparar dados para', l2: 'IA'},
        {w: 24, icon: Ic.copilot, l1: 'Copilot'},
    ]},
];

const treeRows: {name: string; indent: number; on?: boolean; sigma?: boolean; expand?: boolean; icon?: React.ReactNode}[] = [
    {name: 'Cliente', indent: 0},
    {name: 'Continente', indent: 0},
    {name: 'Custo Unitario', indent: 0, sigma: true},
    {name: 'Data da Venda', indent: 0, on: true, expand: true, icon: <Ico s={13} vb="0 0 13 13"><rect x={1} y={1} width={11} height={10} rx={1.5} stroke={W}/><path d="M1 3.5H12M3 6H10M3 8.5H10" stroke={W} strokeDasharray="1 1"/>{Check2(12, 11)}</Ico>},
    {name: 'Hierarquia de datas', indent: 1, on: true, expand: true, icon: <Ico s={13} vb="0 0 13 13"><circle cx={2.5} cy={5} r={2} stroke={W}/><circle cx={8} cy={2} r={2} stroke={W}/><circle cx={8} cy={8} r={2} stroke={W}/><path d="M4 4L6.5 2.5M4 6L6.5 7.5" stroke={W}/>{Check2(10, 9)}</Ico>},
    {name: 'Ano', indent: 2, on: true},
    {name: 'Trimestre', indent: 2},
    {name: 'Mês', indent: 2, on: true},
    {name: 'Dia', indent: 2},
    {name: 'Genero', indent: 0},
    {name: 'Marca', indent: 0},
    {name: 'Nome da Loja', indent: 0},
    {name: 'País', indent: 0},
    {name: 'Preço Unitario', indent: 0, sigma: true},
    {name: 'Produto', indent: 0},
    {name: 'Qtd Vendida', indent: 0, on: true, sigma: true},
    {name: 'Tipo', indent: 0},
    {name: 'Tipo do Produto', indent: 0},
];

const menuItems: {t: string; arrow?: boolean; disabled?: boolean; icon?: React.ReactNode}[] = [
    {t: 'Copiar', arrow: true},
    {t: 'Mostrar o ponto de dados como uma tabela'},
    {t: 'Mostrar como uma tabela'},
    {t: 'Fazer drill up', icon: <Ico s={13} vb="0 0 13 13"><circle cx={6.5} cy={6.5} r={6} stroke="#e0e0e0"/><path d="M6.5 10V3.5M3.8 6L6.5 3.2L9.2 6" stroke="#e0e0e0" strokeWidth={1.4}/></Ico>},
    {t: 'Incluir'},
    {t: 'Excluir'},
    {t: 'Analisar', arrow: true},
    {t: 'Agrupar', disabled: true},
    {t: 'Resumir'},
    {t: 'Novo cálculo do visual', arrow: true},
    {t: 'Configurar uma resposta verificada', icon: <Ico s={13} vb="0 0 13 13"><circle cx={6.5} cy={6.5} r={6} stroke="#555"/><path d="M3.5 6.5L5.5 8.5L9.5 4.5" stroke="#555"/></Ico>},
];

const Well: React.FC<{title: string; hint: string}> = ({title, hint}) => (
    <>
        <WellTitle>{title}</WellTitle>
        <WellBox $h={28}><WellHint>{hint}</WellHint></WellBox>
    </>
);

const App: React.FC = () => {
    return (
        <Root>
            <GlobalStyle/>
            <TitleBar>
                <TitleIcon $w={30}><Ico s={15} vb="0 0 15 15"><path d="M1 1H14V14H1ZM4 1V6H11V1M4 14V9H11V14" stroke="#dcdcdc"/></Ico></TitleIcon>
                <TitleIcon $w={30}><Ico s={15} vb="0 0 15 15"><path d="M3 1V6H8M3 6C6 2 12 3 13 7C13.5 10 11 13 8 14" stroke="#dcdcdc"/></Ico></TitleIcon>
                <TitleIcon $w={25} $dim><Ico s={15} vb="0 0 15 15"><path d="M12 1V6H7M12 6C9 2 3 3 2 7C1.5 10 4 13 7 14" stroke="#aaa"/></Ico></TitleIcon>
                <TitleText>Relatório • Salvo pela última vez: Hoje em 18:58</TitleText>
                <Ico s={9} vb="0 0 9 9"><path d="M1 1.5H8L4.5 7.5Z" stroke="#c8c8c8"/></Ico>
                <UserName>Lucas Fonseca Machado Diniz Fonseca Machado Diniz</UserName>
                <Avatar><Ico s={12} vb="0 0 12 12"><circle cx={6} cy={3} r={2.4} stroke="#ccc"/><path d="M2 7H10V9C10 11 8 12 6 12C4 12 2 11 2 9Z" stroke="#ccc"/></Ico></Avatar>
                <WinButton $ml={30}><Minus size={12} strokeWidth={1}/></WinButton>
                <WinButton $ml={30}><Ico s={11} vb="0 0 11 11"><path d="M1 3H8V10H1ZM3 3V1H10V8H8" stroke="#dcdcdc"/></Ico></WinButton>
                <WinButton $ml={30}><X size={15} strokeWidth={1}/></WinButton>
            </TitleBar>

            <TabBar>
                {tabs.map(t => (
                    <Tab key={t.t} $w={t.w} $active={t.active} $teal={t.teal}><span>{t.t}</span></Tab>
                ))}
                <ShareButton>
                    <Ico s={15} vb="0 0 15 15"><path d="M6 3H1V14H12V9M7 10C7 6 9 5 11 5V2L15 6L11 10V7.5C9 7.5 8 8 7 10Z" stroke="#a9cdc5"/></Ico>
                    Compartilhar
                    <ChevronDown size={13} strokeWidth={1.3}/>
                </ShareButton>
            </TabBar>

            <Ribbon>
                <RibbonGroup $w={194}>
                    <GroupButtons>
                        <RibbonBtn $w={56} $disabled>
                            <BtnIcon>{Ic.colar}</BtnIcon>
                            <BtnLabel>Colar</BtnLabel>
                        </RibbonBtn>
                        <SmallColumn>
                            <SmallRow><SmallIcon>{Ic.cut}</SmallIcon>Recortar</SmallRow>
                            <SmallRow><SmallIcon>{Ic.copy}</SmallIcon>Copiar</SmallRow>
                            <SmallRow><SmallIcon>{Ic.brush}</SmallIcon>Pincel de formatação</SmallRow>
                        </SmallColumn>
                    </GroupButtons>
                    <GroupLabel>Área de Transferência</GroupLabel>
                </RibbonGroup>
                {groups.map(g => (
                    <RibbonGroup key={g.label} $w={g.w}>
                        <GroupButtons>
                            {g.btns.map(b => (
                                <RibbonBtn key={b.l1} $w={b.w} $disabled={b.disabled}>
                                    <BtnIcon>{b.icon}</BtnIcon>
                                    <BtnLabel>
                                        {b.l1}
                                        {b.l2 !== undefined && <br/>}
                                        {b.l2}
                                        {b.caret && <Caret/>}
                                    </BtnLabel>
                                </RibbonBtn>
                            ))}
                        </GroupButtons>
                        <GroupLabel>{g.label}</GroupLabel>
                    </RibbonGroup>
                ))}
                <Collapse><ChevronUp size={12} strokeWidth={2}/></Collapse>
            </Ribbon>

            <Main>
                <LeftNav>
                    <NavSlot><Ico s={16} vb="0 0 16 16"><path d="M1.5 1V14.5H15M4 13V7H6V13M8 13V4H10V13M12 13V5H14V13" stroke="#e6e6e6"/></Ico></NavSlot>
                    <NavSlot><Ico s={16} vb="0 0 16 16"><path d="M1 2H15V14H1ZM1 6H15M1 10H15M5.7 2V14M10.3 2V14" stroke="#c8c8c8"/></Ico></NavSlot>
                    <NavSlot><Ico s={18} vb="0 0 18 18"><path d="M1 6H8V12H1ZM10 1H17V7H10ZM10 11H17V17H10ZM8 8H9V4H10M9 9V14H10" stroke="#c0c0c0"/></Ico></NavSlot>
                    <NavSlot><Ico s={18} vb="0 0 18 18"><path d="M4 10V1H11L15 5V14" stroke="#aaa"/><text x={9} y={17} fontSize={6.5} fill="#aaa" stroke="none" textAnchor="middle" fontFamily="Open Sans">DAX</text></Ico></NavSlot>
                </LeftNav>

                <Workspace>
                    <Sheet>
                        <Canvas>
                            <Visual>
                                <Chart/>
                                <VisualTitle>Soma de Qtd Vendida por Ano e Mês</VisualTitle>
                                <VisualTools>
                                    <ToolSlot $w={28}><Ico s={12} vb="0 0 12 12"><path d="M6 12V1M1.5 5.5L6 1L10.5 5.5" stroke="#8a8a8a"/></Ico></ToolSlot>
                                    <ToolSlot $w={28}><Ico s={12} vb="0 0 12 12"><path d="M6 0V11M1.5 6.5L6 11L10.5 6.5" stroke="#777"/></Ico></ToolSlot>
                                    <ToolSlot $w={28}><Ico s={14} vb="0 0 14 14"><path d="M3 0V13M0.5 10L3 13L5.5 10M11 0V13M8.5 10L11 13L13.5 10" stroke="#c4c4c4"/></Ico></ToolSlot>
                                    <ToolSlot $w={36}><Ico s={12} vb="0 0 12 12"><path d="M6 1V6M2 12V6H10V12M0.5 10L2 12L3.5 10M8.5 10L10 12L11.5 10" stroke="#c4c4c4"/></Ico></ToolSlot>
                                    <ToolSlot $w={28}><Ico s={12} vb="0 0 12 12"><path d="M0 1.5H12M2.5 5.5H9.5M4.5 9.5H7.5" stroke="#777"/></Ico></ToolSlot>
                                    <ToolSlot $w={28}><Ico s={12} vb="0 0 12 12"><path d="M5 0.5H0.5V11.5H11.5V7M0.5 6.5H5.5V11.5M7 5L11.5 0.5M8 0.5H11.5V4" stroke="#777"/></Ico></ToolSlot>
                                    <ToolSlot $w={24}><Ico s={12} vb="0 0 12 12"><circle cx={1.5} cy={5} r={1.3} fill="#777" stroke="none"/><circle cx={6} cy={5} r={1.3} fill="#777" stroke="none"/><circle cx={10.5} cy={5} r={1.3} fill="#777" stroke="none"/></Ico></ToolSlot>
                                </VisualTools>
                                <Handle $x={-2} $y={-2} $w={9} $h={3}/>
                                <Handle $x={-2} $y={-2} $w={3} $h={9}/>
                                <Handle $x={1204} $y={-2} $w={10} $h={3}/>
                                <Handle $x={1212} $y={-2} $w={3} $h={9}/>
                                <Handle $x={-2} $y={609} $w={3} $h={9}/>
                                <Handle $x={-2} $y={616} $w={9} $h={3}/>
                                <Handle $x={1212} $y={609} $w={3} $h={9}/>
                                <Handle $x={1204} $y={616} $w={10} $h={3}/>
                                <Handle $x={600} $y={-2} $w={12} $h={3}/>
                                <Handle $x={600} $y={616} $w={12} $h={3}/>
                                <Handle $x={-2} $y={304} $w={3} $h={12}/>
                                <Handle $x={1212} $y={304} $w={3} $h={12}/>
                            </Visual>
                            <PageEnd/>
                        </Canvas>
                        <FilterRail>
                            <ChevronsLeft size={13} strokeWidth={2.5}/>
                            <FilterGap/>
                            <Ico s={10} vb="0 0 10 10"><path d="M1 5V7M4 4V8M7 1V9M9 1V9" stroke="#666"/></Ico>
                            <FilterTitle>Filtros</FilterTitle>
                        </FilterRail>
                    </Sheet>
                    <PageBar>
                        <DeviceSlot $w={44} $active><Ico s={17} vb="0 0 17 17"><path d="M2 1H15V12H2ZM6 14.5H11M8.5 12V14.5" stroke="#f0f0f0" strokeWidth={1.2}/></Ico></DeviceSlot>
                        <DeviceSlot $w={44}><Ico s={18} vb="0 0 18 18"><rect x={4} y={1} width={10} height={17} rx={2} stroke="#f0f0f0"/><path d="M8 15H10" stroke="#f0f0f0"/></Ico></DeviceSlot>
                        <DeviceSlot $w={21}><Ico s={9} vb="0 0 9 9"><path d="M7 1V8L2 4.5Z" stroke="#aaa"/></Ico></DeviceSlot>
                        <DeviceSlot $w={17}><Ico s={9} vb="0 0 9 9"><path d="M2 1V8L7 4.5Z" stroke="#aaa"/></Ico></DeviceSlot>
                        <PageTab>Página 1</PageTab>
                        <AddPage><Plus size={15} strokeWidth={3} color="#1d1d1d"/></AddPage>
                    </PageBar>
                </Workspace>

                <VizPane>
                    <PaneHeader>Visualizações<ChevronsRight size={13} strokeWidth={3}/></PaneHeader>
                    <CreateLabel>Criar visual</CreateLabel>
                    <VizTabs>
                        <VizTab $active $w={32}>
                            <Ico s={24} vb="0 0 24 24"><path d="M2 1H16" stroke="#bbb"/>{r(2, 4, 21, 7, TEAL)}{r(2, 14, 21, 7, TEAL)}<path d="M2 4H23V11H2ZM2 14H23V21H2Z" stroke="#bbb" strokeDasharray="1 1"/></Ico>
                        </VizTab>
                        <VizTab $w={102}><Ico s={24} vb="0 0 24 24"><path d="M1 21V10H6V21M6 10V2H12V9M12 6H15V9" stroke="#a0a0a0" strokeWidth={1.3}/><path d="M8 23C11 23 12 20 12 17L20 7L23 9L16 19C15 22 12 23 8 23Z" stroke="#a0a0a0" fill="#141414"/></Ico></VizTab>
                        <VizTab $w={28}><Ico s={26} vb="0 0 26 26"><circle cx={11} cy={11} r={10} stroke="#a0a0a0" strokeWidth={1.3}/><path d="M18 18L25 25" stroke="#a0a0a0" strokeWidth={2}/><path d="M4 14L9 9L13 12L19 5" stroke="#a0a0a0"/><path d="M5 19V15M9 20V12M13 20V14M17 18V10" stroke="#a0a0a0"/></Ico></VizTab>
                        <Notch/>
                    </VizTabs>
                    <VizGrid>
                        {vizIcons.map((icon, i) => (
                            <VizCell key={i} $selected={i === 1}>
                                <div><Ico s={18} vb="0 0 18 18">{icon}</Ico></div>
                            </VizCell>
                        ))}
                        <MoreDots>...</MoreDots>
                    </VizGrid>

                    <WellTitle $first>Eixo X</WellTitle>
                    <WellBox $h={76}>
                        <FieldBox>
                            <FieldRow $h={21}><span>Data da Venda</span><ChevronDown size={12}/><X size={11}/></FieldRow>
                            <FieldRow $h={19} $sub><span>Ano</span><X size={11}/></FieldRow>
                            <FieldRow $h={19} $sub><span>Mês</span><X size={11}/></FieldRow>
                        </FieldBox>
                    </WellBox>
                    <WellTitle>Eixo Y</WellTitle>
                    <WellBox $h={37}>
                        <FieldBox>
                            <FieldRow $h={21}><span>Soma de Qtd Vendida</span><ChevronDown size={12}/><X size={11}/></FieldRow>
                        </FieldBox>
                    </WellBox>
                    <Well title="Legenda" hint="Adicionar os campos de da..."/>
                    <Well title="Múltiplos pequenos" hint="Adicionar os campos de da..."/>
                    <Well title="Dicas de ferramentas" hint="Adicionar os campos de da..."/>
                    <WellTitle $bold>Drill-through</WellTitle>
                    <DrillRow $h={16} $mt={9}>Relatório cruzado<Toggle><i/></Toggle></DrillRow>
                    <DrillRow $h={32} $mt={10}><div>Manter todos os<br/>filtros</div><Toggle $on><Check size={10} color="#1b1b1b"/><i/></Toggle></DrillRow>
                    <WellBox $h={25} $black><WellHint $black>Adicionar os campos de dr...</WellHint></WellBox>
                </VizPane>

                <DataPane>
                    <PaneHeader>Dados<ChevronsRight size={13} strokeWidth={3}/></PaneHeader>
                    <SearchBox><Search size={14} strokeWidth={1.3} color="#c8c8c8"/>Pesquisar</SearchBox>
                    <Tree>
                        <TreeRow $indent={0} $table>
                            <ExpandSlot><ChevronDown size={12} strokeWidth={1.6}/></ExpandSlot>
                            <TableIcon $w={21}>
                                <Ico s={12} vb="0 0 12 12"><path d="M1 1H11V11H1ZM1 4H11M1 7.5H11M4.5 1V11M8 1V11" stroke={W}/>{Check2(5, 11)}</Ico>
                            </TableIcon>
                            Base Vendas
                        </TreeRow>
                        {treeRows.map(row => (
                            <TreeRow key={row.name} $indent={row.indent}>
                                <ExpandSlot>{row.expand && <ChevronDown size={12} strokeWidth={1.6}/>}</ExpandSlot>
                                <CheckBox $on={row.on}>{row.on && <Check size={10} strokeWidth={1.5}/>}</CheckBox>
                                <FieldIcon>
                                    {row.sigma ? <Ico s={12} vb="0 0 12 12"><path d="M10.5 1.5H1.5L6 6L1.5 10.5H10.5" stroke={W}/></Ico> : row.icon}
                                </FieldIcon>
                                {row.name}
                            </TreeRow>
                        ))}
                    </Tree>
                </DataPane>
            </Main>

            <StatusBar>
                Página 1 de 1
                <ZoomControl>
                    <Minus size={9} strokeWidth={2}/>
                    <ZoomTrack/>
                    <Plus size={11} strokeWidth={1.5}/>
                    <ZoomValue>109%</ZoomValue>
                    <Ico w={15} h={11} vb="0 0 15 11"><path d="M1 1H14V10H1ZM5 3H3V8H5M10 3H12V8H10" stroke="#cfcfcf"/></Ico>
                </ZoomControl>
            </StatusBar>

            <Menu>
                {menuItems.map(m => (
                    <MenuItem key={m.t} $disabled={m.disabled}>
                        <MenuIcon>{m.icon}</MenuIcon>
                        {m.t}
                        {m.arrow && <MenuArrow><ChevronRight size={20} strokeWidth={0.8}/></MenuArrow>}
                    </MenuItem>
                ))}
                <RedFrame/>
                <SubMenu>Explicar o aumento</SubMenu>
            </Menu>
            <Tooltip>Explicar o aumento</Tooltip>
        </Root>
    );
};

export default App;
